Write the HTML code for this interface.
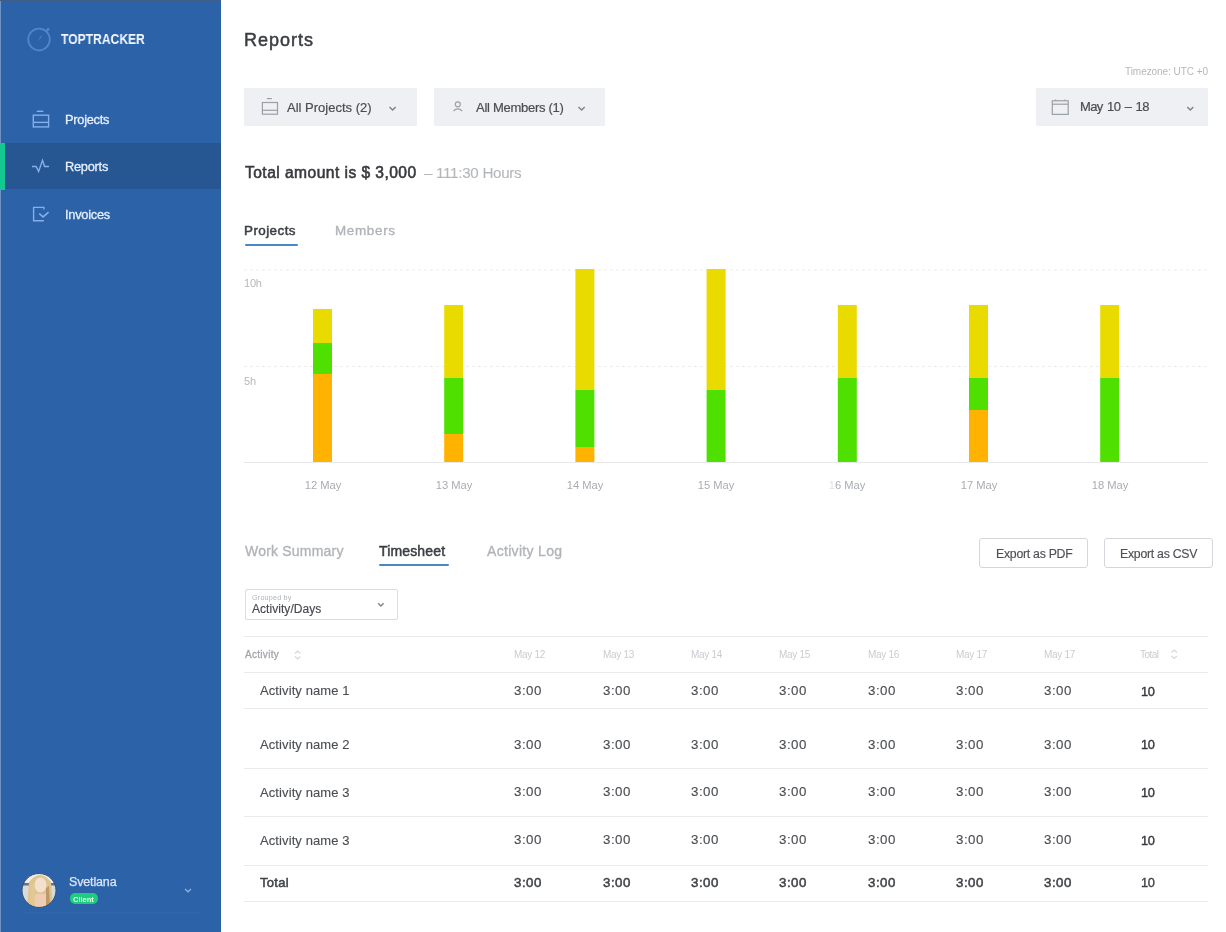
<!DOCTYPE html>
<html><head><meta charset="utf-8"><style>
html,body{margin:0;padding:0;}
body{width:1226px;height:932px;position:relative;overflow:hidden;background:#fff;font-family:"Liberation Sans",sans-serif;}
.t{position:absolute;line-height:1;white-space:nowrap;will-change:transform;}
.abs{position:absolute;}
svg{position:absolute;overflow:visible;}
</style></head><body>
<div class="abs" style="left:0;top:0;width:221px;height:932px;background:#2c62a8;"></div>
<div class="abs" style="left:0;top:0;width:1px;height:932px;background:#6f93c2;"></div>
<div class="abs" style="left:0;top:0;width:221px;height:1px;background:#3f5f86;"></div>
<div class="abs" style="left:0;top:143px;width:221px;height:46px;background:#265793;"></div>
<div class="abs" style="left:0;top:143px;width:5px;height:47px;background:#13c98f;"></div>
<svg style="left:0;top:0" width="221" height="60"><g fill="none" stroke="#5185cc" stroke-width="1.8">
<circle cx="39" cy="39.5" r="10.8"/><path d="M46.5 31 L49 28.5" stroke-width="2.5"/><path d="M39 39.5 L42 35.5" stroke-width="1.2" stroke="#4a7fc8"/></g></svg>
<div class="t" style="left:60.5px;top:32.15px;font-size:14px;color:#f2f7ff;font-weight:700;letter-spacing:0px;transform:scaleX(0.865);transform-origin:0 0;">TOPTRACKER</div>
<svg style="left:0;top:0" width="221" height="240"><g fill="none" stroke="#84afea" stroke-width="1.4">
<path d="M36.8 111.3 H43.4"/><rect x="33.3" y="115.2" width="15.3" height="11.7"/><path d="M33.3 122.4 H48.6"/>
<path d="M32 166.5 H36.1 L38.6 171.4 L42.5 160.3 L44.6 166.5 H49" stroke-linejoin="miter"/>
<path d="M43.9 209.6 V207.4 H33.6 V220.8 H43.9"/><path d="M39.2 213.6 L43.1 216.9 L48.6 212.2" stroke-width="1.6"/>
</g></svg>
<div class="t" style="left:65.3px;top:113.96px;font-size:12.8px;color:#e6efff;-webkit-text-stroke:0.3px #e6efff;letter-spacing:-0.25px;">Projects</div>
<div class="t" style="left:65.3px;top:161.16px;font-size:12.8px;color:#e6efff;-webkit-text-stroke:0.3px #e6efff;letter-spacing:-0.25px;">Reports</div>
<div class="t" style="left:65.3px;top:209.26px;font-size:12.8px;color:#e6efff;-webkit-text-stroke:0.3px #e6efff;letter-spacing:-0.25px;">Invoices</div>
<svg style="left:0;top:0" width="221" height="932">
<defs><clipPath id="av"><circle cx="39" cy="890.5" r="17"/></clipPath><filter id="bl" x="-10%" y="-10%" width="120%" height="120%"><feGaussianBlur stdDeviation="0.7"/></filter></defs>
<g clip-path="url(#av)"><g filter="url(#bl)">
<rect x="21" y="873" width="36" height="36" fill="#d9dadb"/>
<rect x="21" y="873" width="36" height="10" fill="#eeeeec"/>
<rect x="21" y="883" width="9" height="2.5" fill="#6a717a"/>
<rect x="49" y="883" width="9" height="2.5" fill="#6a717a"/>
<path d="M29 882 Q40 868 51 882 L53 908 L27 908 Z" fill="#dfc48f"/>
<ellipse cx="40.5" cy="885" rx="6" ry="7.5" fill="#f3e1cf"/>
<path d="M35 894 L46 894 L50 908 L32 908 Z" fill="#efcdb4"/>
<path d="M31 884 L34.5 884 L35 908 L30 908 Z" fill="#e2c894"/>
<path d="M46 888 L49 886 L50 906 L46 908 Z" fill="#bf9a66"/>
</g></g>
<circle cx="39" cy="890.5" r="17" fill="none" stroke="#34507a" stroke-width="1"/>
<path d="M185 889 L188 891.8 L191 889" fill="none" stroke="#8fb0e0" stroke-width="1.3"/>
<rect x="24" y="912.5" width="176" height="1" fill="#3468ad"/>
</svg>
<div class="t" style="left:69.2px;top:876.32px;font-size:12.5px;color:#d9e6fa;-webkit-text-stroke:0.25px #d9e6fa;letter-spacing:-0.15px;">Svetlana</div>
<div class="abs" style="left:69.6px;top:893.4px;width:28.6px;height:10.6px;border-radius:5px;background:#1fcb7c;"></div>
<div class="t" style="left:72.5px;top:895.65px;font-size:7.5px;color:#e9fff3;font-weight:700;letter-spacing:0px;">Client</div>
<div class="t" style="left:244px;top:31.16px;font-size:18px;color:#3a3d42;-webkit-text-stroke:0.5px #3a3d42;letter-spacing:1.0px;">Reports</div>
<div class="t" style="right:18px;top:67.03px;font-size:10px;color:#b4b7bb;letter-spacing:-0.05px;">Timezone: UTC +0</div>
<div class="abs" style="left:244px;top:88px;width:173px;height:38px;background:#eef0f3;border-radius:1px;"></div>
<div class="abs" style="left:434px;top:88px;width:171px;height:38px;background:#eef0f3;border-radius:1px;"></div>
<div class="abs" style="left:1036px;top:88px;width:172px;height:38px;background:#eef0f3;border-radius:1px;"></div>
<svg style="left:0;top:0" width="1226" height="140"><g fill="none" stroke="#9aa0a7" stroke-width="1.2">
<path d="M266.9 98.6 H271.9"/><rect x="262.4" y="102.5" width="15.1" height="11.7"/><path d="M262.4 110.3 H277.5"/>
<circle cx="457.8" cy="104.3" r="2.5"/><path d="M453.5 111 Q457.8 106.8 462.2 111"/>
<rect x="1052.3" y="100.8" width="15.9" height="13.6"/><path d="M1052.3 104.2 H1068.2"/><path d="M1055.6 99.5 V101 M1064.9 99.5 V101"/>
</g><g fill="none" stroke="#7d8289" stroke-width="1.4">
<path d="M389.5 107 L392.6 110 L395.7 107"/>
<path d="M578.5 107 L581.6 110 L584.7 107"/>
<path d="M1187.3 107 L1190.3 110 L1193.3 107"/>
</g></svg>
<div class="t" style="left:286.8px;top:100.80px;font-size:13px;color:#4a4d52;-webkit-text-stroke:0.2px #4a4d52;letter-spacing:0px;">All Projects (2)</div>
<div class="t" style="left:475.7px;top:101.00px;font-size:13px;color:#4a4d52;-webkit-text-stroke:0.2px #4a4d52;letter-spacing:-0.28px;">All Members (1)</div>
<div class="t" style="left:1079.6px;top:100.40px;font-size:13px;color:#4a4d52;-webkit-text-stroke:0.2px #4a4d52;letter-spacing:-0.6px;word-spacing:1.3px;">May 10 – 18</div>
<div class="t" style="left:245px;top:165.09px;font-size:15.6px;color:#37393d;-webkit-text-stroke:0.55px #37393d;letter-spacing:0.45px;">Total amount is $ 3,000</div>
<div class="t" style="left:424px;top:165.43px;font-size:15.2px;color:#b3b6ba;-webkit-text-stroke:0.1px #b3b6ba;letter-spacing:-0.3px;">– 111:30 Hours</div>
<div class="t" style="left:244px;top:223.96px;font-size:13.4px;color:#3b3e43;-webkit-text-stroke:0.5px #3b3e43;letter-spacing:0.45px;">Projects</div>
<div class="t" style="left:335px;top:223.96px;font-size:13.4px;color:#b0b3b8;-webkit-text-stroke:0.35px #b0b3b8;letter-spacing:0.7px;">Members</div>
<div class="abs" style="left:244.5px;top:244px;width:53px;height:2px;background:#4b87c8;border-radius:1px;"></div>
<svg style="left:0;top:0" width="1226" height="932">
<g stroke="#ebecee" stroke-width="1" stroke-dasharray="3 3" fill="none">
<path d="M244 270 H1208"/><path d="M244 366.5 H1208"/></g>
<path d="M244 462.5 H1208" stroke="#e6e8ea" stroke-width="1.2"/>
<rect x="313.0" y="309" width="19" height="34" fill="#e9da00"/><rect x="313.0" y="343" width="19" height="31" fill="#4fe000"/><rect x="313.0" y="374" width="19" height="88" fill="#ffb200"/><rect x="444.2" y="305" width="19" height="73" fill="#e9da00"/><rect x="444.2" y="378" width="19" height="56" fill="#4fe000"/><rect x="444.2" y="434" width="19" height="28" fill="#ffb200"/><rect x="575.4" y="269" width="19" height="121" fill="#e9da00"/><rect x="575.4" y="390" width="19" height="57" fill="#4fe000"/><rect x="575.4" y="447" width="19" height="15" fill="#ffb200"/><rect x="706.6" y="269" width="19" height="121" fill="#e9da00"/><rect x="706.6" y="390" width="19" height="72" fill="#4fe000"/><rect x="837.8" y="305" width="19" height="73" fill="#e9da00"/><rect x="837.8" y="378" width="19" height="84" fill="#4fe000"/><rect x="969.0" y="305" width="19" height="73" fill="#e9da00"/><rect x="969.0" y="378" width="19" height="32" fill="#4fe000"/><rect x="969.0" y="410" width="19" height="52" fill="#ffb200"/><rect x="1100.2" y="305" width="19" height="73" fill="#e9da00"/><rect x="1100.2" y="378" width="19" height="84" fill="#4fe000"/></svg>
<div class="t" style="left:244px;top:277.99px;font-size:11px;color:#b5b8bc;letter-spacing:-0.2px;">10h</div>
<div class="t" style="left:244px;top:375.69px;font-size:11px;color:#b5b8bc;letter-spacing:-0.2px;">5h</div>
<div class="t" style="left:282.5px;width:80px;text-align:center;top:479.52px;font-size:11.2px;color:#a9acb1;letter-spacing:0px;">12 May</div>
<div class="t" style="left:413.7px;width:80px;text-align:center;top:479.52px;font-size:11.2px;color:#a9acb1;letter-spacing:0px;">13 May</div>
<div class="t" style="left:544.9px;width:80px;text-align:center;top:479.52px;font-size:11.2px;color:#a9acb1;letter-spacing:0px;">14 May</div>
<div class="t" style="left:676.1px;width:80px;text-align:center;top:479.52px;font-size:11.2px;color:#a9acb1;letter-spacing:0px;">15 May</div>
<div class="t" style="left:807.3px;width:80px;text-align:center;top:479.52px;font-size:11.2px;color:#a9acb1;letter-spacing:0px;"><span style="color:#dfe1e4">1</span>6 May</div>
<div class="t" style="left:938.5px;width:80px;text-align:center;top:479.52px;font-size:11.2px;color:#a9acb1;letter-spacing:0px;">17 May</div>
<div class="t" style="left:1069.7px;width:80px;text-align:center;top:479.52px;font-size:11.2px;color:#a9acb1;letter-spacing:0px;">18 May</div>
<div class="t" style="left:244.5px;top:543.65px;font-size:14px;color:#b1b4b8;-webkit-text-stroke:0.35px #b1b4b8;letter-spacing:0.2px;">Work Summary</div>
<div class="t" style="left:378.5px;top:543.65px;font-size:14px;color:#3b3e43;-webkit-text-stroke:0.5px #3b3e43;letter-spacing:0.15px;">Timesheet</div>
<div class="t" style="left:487px;top:543.65px;font-size:14px;color:#b1b4b8;-webkit-text-stroke:0.35px #b1b4b8;letter-spacing:0.32px;">Activity Log</div>
<div class="abs" style="left:378.5px;top:564px;width:70px;height:2px;background:#4b87c8;border-radius:1px;"></div>
<div class="abs" style="left:979px;top:538px;width:107px;height:28px;border:1px solid #d3d6da;border-radius:3px;background:#fff;"></div>
<div class="t" style="left:995.5px;top:547.79px;font-size:12.3px;color:#4d5055;-webkit-text-stroke:0.15px #4d5055;letter-spacing:-0.27px;">Export as PDF</div>
<div class="abs" style="left:1103.5px;top:538px;width:107.0px;height:28px;border:1px solid #d3d6da;border-radius:3px;background:#fff;"></div>
<div class="t" style="left:1120px;top:547.79px;font-size:12.3px;color:#4d5055;-webkit-text-stroke:0.15px #4d5055;letter-spacing:-0.27px;">Export as CSV</div>
<div class="abs" style="left:244.5px;top:589px;width:151.5px;height:28.5px;border:1px solid #d9dce0;border-radius:2px;background:#fff;"></div>
<div class="t" style="left:252.4px;top:593.91px;font-size:7.2px;color:#b0b4b8;letter-spacing:0.2px;">Grouped by</div>
<div class="t" style="left:252.4px;top:603.14px;font-size:12px;color:#45484d;-webkit-text-stroke:0.15px #45484d;letter-spacing:0.05px;">Activity/Days</div>
<svg style="left:0;top:0" width="1226" height="932"><path d="M378.2 603.2 L380.9 606 L383.6 603.2" fill="none" stroke="#7d8289" stroke-width="1.3"/></svg>
<div class="abs" style="left:244px;top:635.5px;width:964px;height:1px;background:#e8eaec;"></div>
<div class="abs" style="left:244px;top:672.0px;width:964px;height:1px;background:#e8eaec;"></div>
<div class="abs" style="left:244px;top:708.0px;width:964px;height:1px;background:#e8eaec;"></div>
<div class="abs" style="left:244px;top:767.5px;width:964px;height:1px;background:#e8eaec;"></div>
<div class="abs" style="left:244px;top:816.0px;width:964px;height:1px;background:#e8eaec;"></div>
<div class="abs" style="left:244px;top:864.5px;width:964px;height:1px;background:#e8eaec;"></div>
<div class="abs" style="left:244px;top:900.5px;width:964px;height:1px;background:#e8eaec;"></div>
<div class="t" style="left:244.5px;top:649.53px;font-size:10px;color:#a3a6ab;-webkit-text-stroke:0.3px #a3a6ab;letter-spacing:0.3px;">Activity</div>
<svg style="left:0;top:0" width="1226" height="932"><g fill="none" stroke="#d3d6d9" stroke-width="1.1"><path d="M295 653.5 L297.7 651 L300.4 653.5 M295 656.5 L297.7 659 L300.4 656.5"/><path d="M1171.5 652.5 L1174.2 650 L1176.9 652.5 M1171.5 656 L1174.2 658.5 L1176.9 656"/></g></svg>
<div class="t" style="left:514px;top:649.53px;font-size:10px;color:#c9ccd0;letter-spacing:-0.3px;">May 12</div>
<div class="t" style="left:603px;top:649.53px;font-size:10px;color:#c9ccd0;letter-spacing:-0.3px;">May 13</div>
<div class="t" style="left:690.5px;top:649.53px;font-size:10px;color:#c9ccd0;letter-spacing:-0.3px;">May 14</div>
<div class="t" style="left:779px;top:649.53px;font-size:10px;color:#c9ccd0;letter-spacing:-0.3px;">May 15</div>
<div class="t" style="left:867.5px;top:649.53px;font-size:10px;color:#c9ccd0;letter-spacing:-0.3px;">May 16</div>
<div class="t" style="left:956px;top:649.53px;font-size:10px;color:#c9ccd0;letter-spacing:-0.3px;">May 17</div>
<div class="t" style="left:1044px;top:649.53px;font-size:10px;color:#c9ccd0;letter-spacing:-0.3px;">May 17</div>
<div class="t" style="left:1140px;top:649.53px;font-size:10px;color:#c9ccd0;letter-spacing:-0.55px;">Total</div>
<div class="t" style="left:259.8px;top:684.30px;font-size:13px;color:#4a4d52;-webkit-text-stroke:0.12px #4a4d52;letter-spacing:0.1px;">Activity name 1</div>
<div class="t" style="left:514px;top:684.04px;font-size:13.3px;color:#4a4d52;-webkit-text-stroke:0.12px #4a4d52;letter-spacing:0.5px;">3:00</div>
<div class="t" style="left:603px;top:684.04px;font-size:13.3px;color:#4a4d52;-webkit-text-stroke:0.12px #4a4d52;letter-spacing:0.5px;">3:00</div>
<div class="t" style="left:690.5px;top:684.04px;font-size:13.3px;color:#4a4d52;-webkit-text-stroke:0.12px #4a4d52;letter-spacing:0.5px;">3:00</div>
<div class="t" style="left:779px;top:684.04px;font-size:13.3px;color:#4a4d52;-webkit-text-stroke:0.12px #4a4d52;letter-spacing:0.5px;">3:00</div>
<div class="t" style="left:867.5px;top:684.04px;font-size:13.3px;color:#4a4d52;-webkit-text-stroke:0.12px #4a4d52;letter-spacing:0.5px;">3:00</div>
<div class="t" style="left:956px;top:684.04px;font-size:13.3px;color:#4a4d52;-webkit-text-stroke:0.12px #4a4d52;letter-spacing:0.5px;">3:00</div>
<div class="t" style="left:1044px;top:684.04px;font-size:13.3px;color:#4a4d52;-webkit-text-stroke:0.12px #4a4d52;letter-spacing:0.5px;">3:00</div>
<div class="t" style="left:1140.5px;top:685.66px;font-size:12.8px;color:#36393d;-webkit-text-stroke:0.4px #36393d;letter-spacing:-0.4px;">10</div>
<div class="t" style="left:259.8px;top:737.80px;font-size:13px;color:#4a4d52;-webkit-text-stroke:0.12px #4a4d52;letter-spacing:0.1px;">Activity name 2</div>
<div class="t" style="left:514px;top:737.54px;font-size:13.3px;color:#4a4d52;-webkit-text-stroke:0.12px #4a4d52;letter-spacing:0.5px;">3:00</div>
<div class="t" style="left:603px;top:737.54px;font-size:13.3px;color:#4a4d52;-webkit-text-stroke:0.12px #4a4d52;letter-spacing:0.5px;">3:00</div>
<div class="t" style="left:690.5px;top:737.54px;font-size:13.3px;color:#4a4d52;-webkit-text-stroke:0.12px #4a4d52;letter-spacing:0.5px;">3:00</div>
<div class="t" style="left:779px;top:737.54px;font-size:13.3px;color:#4a4d52;-webkit-text-stroke:0.12px #4a4d52;letter-spacing:0.5px;">3:00</div>
<div class="t" style="left:867.5px;top:737.54px;font-size:13.3px;color:#4a4d52;-webkit-text-stroke:0.12px #4a4d52;letter-spacing:0.5px;">3:00</div>
<div class="t" style="left:956px;top:737.54px;font-size:13.3px;color:#4a4d52;-webkit-text-stroke:0.12px #4a4d52;letter-spacing:0.5px;">3:00</div>
<div class="t" style="left:1044px;top:737.54px;font-size:13.3px;color:#4a4d52;-webkit-text-stroke:0.12px #4a4d52;letter-spacing:0.5px;">3:00</div>
<div class="t" style="left:1140.5px;top:739.16px;font-size:12.8px;color:#36393d;-webkit-text-stroke:0.4px #36393d;letter-spacing:-0.4px;">10</div>
<div class="t" style="left:259.8px;top:785.60px;font-size:13px;color:#4a4d52;-webkit-text-stroke:0.12px #4a4d52;letter-spacing:0.1px;">Activity name 3</div>
<div class="t" style="left:514px;top:785.34px;font-size:13.3px;color:#4a4d52;-webkit-text-stroke:0.12px #4a4d52;letter-spacing:0.5px;">3:00</div>
<div class="t" style="left:603px;top:785.34px;font-size:13.3px;color:#4a4d52;-webkit-text-stroke:0.12px #4a4d52;letter-spacing:0.5px;">3:00</div>
<div class="t" style="left:690.5px;top:785.34px;font-size:13.3px;color:#4a4d52;-webkit-text-stroke:0.12px #4a4d52;letter-spacing:0.5px;">3:00</div>
<div class="t" style="left:779px;top:785.34px;font-size:13.3px;color:#4a4d52;-webkit-text-stroke:0.12px #4a4d52;letter-spacing:0.5px;">3:00</div>
<div class="t" style="left:867.5px;top:785.34px;font-size:13.3px;color:#4a4d52;-webkit-text-stroke:0.12px #4a4d52;letter-spacing:0.5px;">3:00</div>
<div class="t" style="left:956px;top:785.34px;font-size:13.3px;color:#4a4d52;-webkit-text-stroke:0.12px #4a4d52;letter-spacing:0.5px;">3:00</div>
<div class="t" style="left:1044px;top:785.34px;font-size:13.3px;color:#4a4d52;-webkit-text-stroke:0.12px #4a4d52;letter-spacing:0.5px;">3:00</div>
<div class="t" style="left:1140.5px;top:786.96px;font-size:12.8px;color:#36393d;-webkit-text-stroke:0.4px #36393d;letter-spacing:-0.4px;">10</div>
<div class="t" style="left:259.8px;top:833.60px;font-size:13px;color:#4a4d52;-webkit-text-stroke:0.12px #4a4d52;letter-spacing:0.1px;">Activity name 3</div>
<div class="t" style="left:514px;top:833.34px;font-size:13.3px;color:#4a4d52;-webkit-text-stroke:0.12px #4a4d52;letter-spacing:0.5px;">3:00</div>
<div class="t" style="left:603px;top:833.34px;font-size:13.3px;color:#4a4d52;-webkit-text-stroke:0.12px #4a4d52;letter-spacing:0.5px;">3:00</div>
<div class="t" style="left:690.5px;top:833.34px;font-size:13.3px;color:#4a4d52;-webkit-text-stroke:0.12px #4a4d52;letter-spacing:0.5px;">3:00</div>
<div class="t" style="left:779px;top:833.34px;font-size:13.3px;color:#4a4d52;-webkit-text-stroke:0.12px #4a4d52;letter-spacing:0.5px;">3:00</div>
<div class="t" style="left:867.5px;top:833.34px;font-size:13.3px;color:#4a4d52;-webkit-text-stroke:0.12px #4a4d52;letter-spacing:0.5px;">3:00</div>
<div class="t" style="left:956px;top:833.34px;font-size:13.3px;color:#4a4d52;-webkit-text-stroke:0.12px #4a4d52;letter-spacing:0.5px;">3:00</div>
<div class="t" style="left:1044px;top:833.34px;font-size:13.3px;color:#4a4d52;-webkit-text-stroke:0.12px #4a4d52;letter-spacing:0.5px;">3:00</div>
<div class="t" style="left:1140.5px;top:834.96px;font-size:12.8px;color:#36393d;-webkit-text-stroke:0.4px #36393d;letter-spacing:-0.4px;">10</div>
<div class="t" style="left:259.5px;top:876.40px;font-size:13px;color:#3f4247;-webkit-text-stroke:0.5px #3f4247;letter-spacing:0.3px;">Total</div>
<div class="t" style="left:514px;top:876.14px;font-size:13.3px;color:#3f4247;-webkit-text-stroke:0.5px #3f4247;letter-spacing:0.5px;">3:00</div>
<div class="t" style="left:603px;top:876.14px;font-size:13.3px;color:#3f4247;-webkit-text-stroke:0.5px #3f4247;letter-spacing:0.5px;">3:00</div>
<div class="t" style="left:690.5px;top:876.14px;font-size:13.3px;color:#3f4247;-webkit-text-stroke:0.5px #3f4247;letter-spacing:0.5px;">3:00</div>
<div class="t" style="left:779px;top:876.14px;font-size:13.3px;color:#3f4247;-webkit-text-stroke:0.5px #3f4247;letter-spacing:0.5px;">3:00</div>
<div class="t" style="left:867.5px;top:876.14px;font-size:13.3px;color:#3f4247;-webkit-text-stroke:0.5px #3f4247;letter-spacing:0.5px;">3:00</div>
<div class="t" style="left:956px;top:876.14px;font-size:13.3px;color:#3f4247;-webkit-text-stroke:0.5px #3f4247;letter-spacing:0.5px;">3:00</div>
<div class="t" style="left:1044px;top:876.14px;font-size:13.3px;color:#3f4247;-webkit-text-stroke:0.5px #3f4247;letter-spacing:0.5px;">3:00</div>
<div class="t" style="left:1140.5px;top:876.56px;font-size:12.8px;color:#3f4247;-webkit-text-stroke:0.35px #3f4247;letter-spacing:-0.4px;">10</div>
</body></html>
